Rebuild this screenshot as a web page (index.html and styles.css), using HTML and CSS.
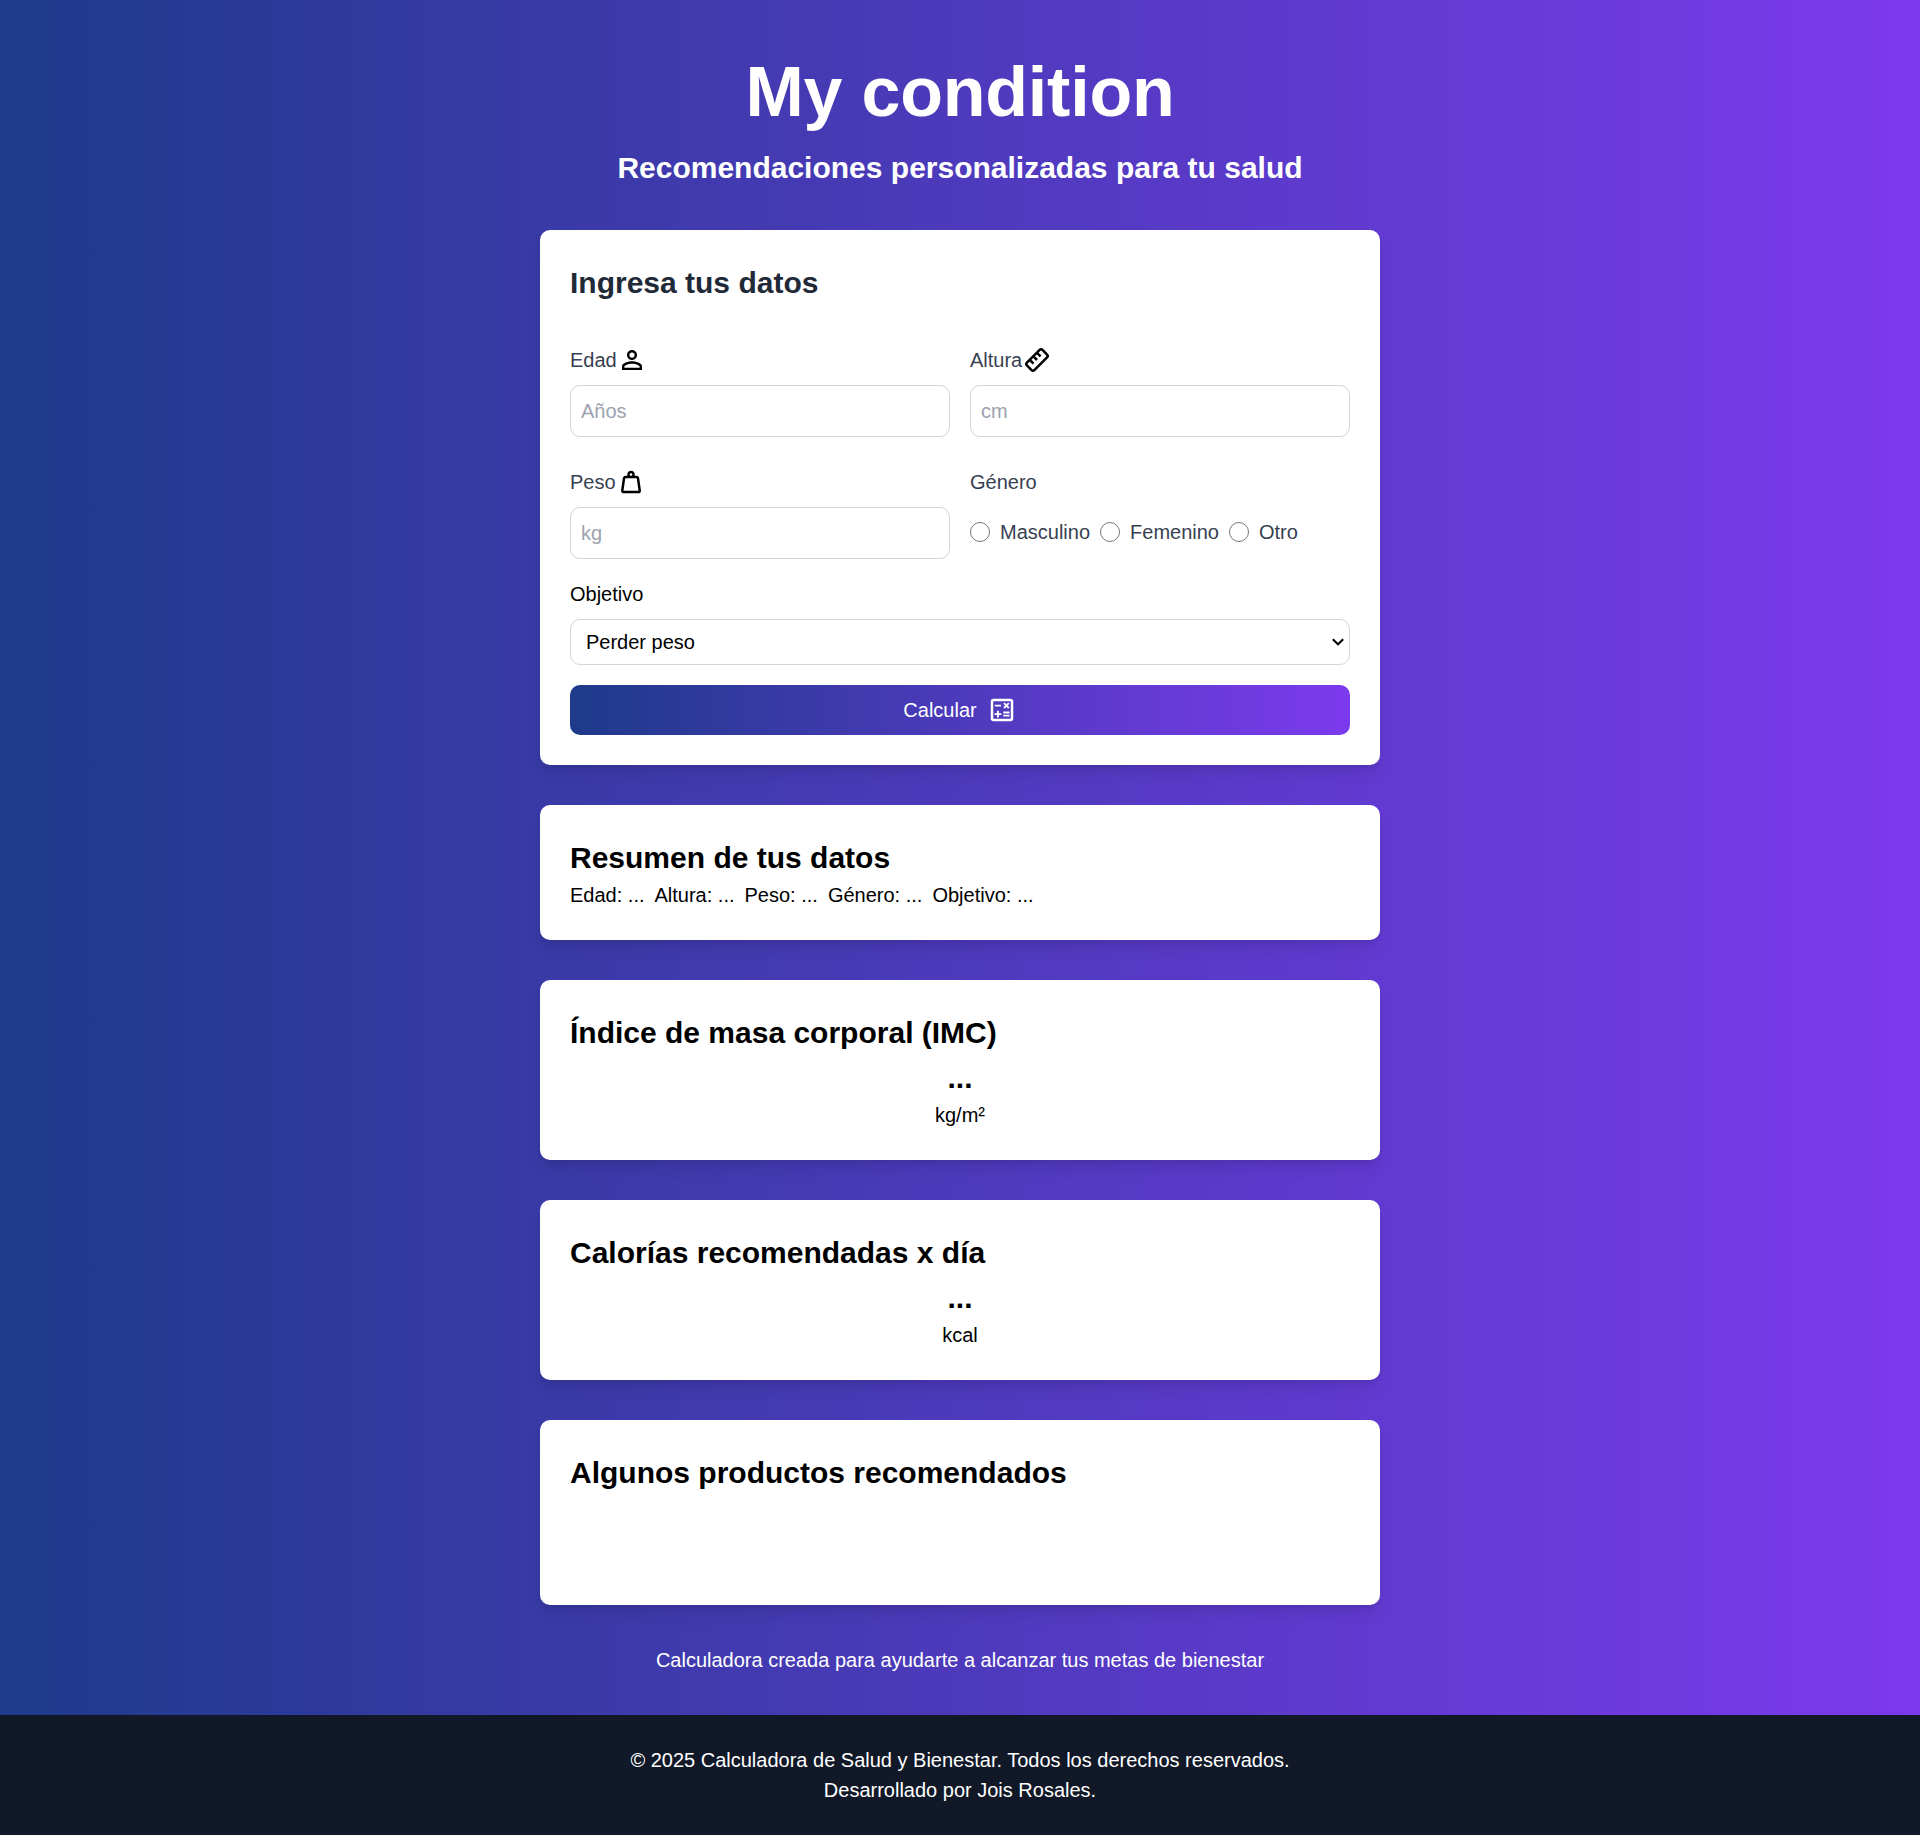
FILE: index.html
```html
<!DOCTYPE html>
<html lang="es">
<head>
<meta charset="utf-8">
<title>My condition</title>
<link rel="stylesheet" href="styles.css">
</head>
<body>
<div class="page">
  <header class="header">
    <h1>My condition</h1>
    <h2>Recomendaciones personalizadas para tu salud</h2>
  </header>
  <main class="main">
    <section class="card">
      <h2 class="form-title">Ingresa tus datos</h2>
      <form class="form">
        <div class="fields">
          <div class="field">
            <label class="label" for="edad">Edad<svg class="icon" viewBox="0 0 24 24"><path d="M12 5.9a2.1 2.1 0 1 1 0 4.2 2.1 2.1 0 0 1 0-4.2m0 9c2.97 0 6.1 1.46 6.1 2.1v1.1H5.9V17c0-.64 3.13-2.1 6.1-2.1M12 4C9.79 4 8 5.79 8 8s1.79 4 4 4 4-1.79 4-4-1.79-4-4-4zm0 9c-2.67 0-8 1.34-8 4v3h16v-3c0-2.66-5.33-4-8-4z"/></svg></label>
            <input class="input" id="edad" type="text" placeholder="Años">
          </div>
          <div class="field">
            <label class="label" for="altura">Altura<svg class="icon" viewBox="0 0 24 24"><g transform="rotate(-45 12 12)" fill="none" stroke="#000" stroke-width="2"><rect x="3.200" y="7.800" width="17.600" height="8.400" rx="1.600"/><path d="M8 8v4M12 8v4M16 8v4"/></g></svg></label>
            <input class="input" id="altura" type="text" placeholder="cm">
          </div>
          <div class="field">
            <label class="label" for="peso">Peso<svg class="icon" viewBox="0 -960 960 960"><path d="M240-200h480l-57-400H297l-57 400Zm240-480q17 0 28.500-11.500T520-720q0-17-11.500-28.500T480-760q-17 0-28.500 11.500T440-720q0 17 11.500 28.500T480-680Zm113 0h70q30 0 52 20t27 49l57 400q5 36-18.500 63.500T720-120H240q-37 0-60.500-27.500T161-211l57-400q5-29 27-49t52-20h70q-3-10-5-19.500t-2-20.500q0-50 35-85t85-35q50 0 85 35t35 85q0 11-2 20.500t-5 19.500Z"/></svg></label>
            <input class="input" id="peso" type="text" placeholder="kg">
          </div>
          <div class="field">
            <span class="label">Género</span>
            <div class="radios">
              <label class="radio"><input type="radio" name="genero">Masculino</label>
              <label class="radio"><input type="radio" name="genero">Femenino</label>
              <label class="radio"><input type="radio" name="genero">Otro</label>
            </div>
          </div>
        </div>
        <div class="goal">
          <label for="objetivo">Objetivo</label>
          <select class="select" id="objetivo"><option>Perder peso</option></select>
        </div>
        <button class="button" type="button">Calcular<svg class="icon" viewBox="0 0 24 24"><path d="M19 3H5c-1.100 0-2 .9-2 2v14c0 1.100.9 2 2 2h14c1.100 0 2-.9 2-2V5c0-1.100-.9-2-2-2zm0 16H5V5h14v14zM6.250 7.720h5v1.500h-5zM13 15.750h5v1.500h-5zM13 13.250h5v1.500h-5zM8 18h1.500v-2h2v-1.500h-2v-2H8v2H6V16h2zM14.090 10.950l1.410-1.410 1.410 1.410 1.060-1.060-1.410-1.420 1.410-1.410L16.910 6 15.500 7.410 14.090 6l-1.060 1.060 1.410 1.410-1.410 1.420z"/></svg></button>
      </form>
    </section>
    <section class="card">
      <h2>Resumen de tus datos</h2>
      <div class="summary"><p>Edad: ...</p><p>Altura: ...</p><p>Peso: ...</p><p>Género: ...</p><p>Objetivo: ...</p></div>
    </section>
    <section class="card">
      <h2>Índice de masa corporal (IMC)</h2>
      <div class="result"><strong>...</strong><p>kg/m²</p></div>
    </section>
    <section class="card">
      <h2>Calorías recomendadas x día</h2>
      <div class="result"><strong>...</strong><p>kcal</p></div>
    </section>
    <section class="card">
      <h2>Algunos productos recomendados</h2>
      <div class="products"></div>
    </section>
  </main>
  <p class="tagline">Calculadora creada para ayudarte a alcanzar tus metas de bienestar</p>
</div>
<footer class="footer">
  <p>© 2025 Calculadora de Salud y Bienestar. Todos los derechos reservados.</p>
  <p>Desarrollado por Jois Rosales.</p>
</footer>
</body>
</html>
```
FILE: styles.css
```css
* { box-sizing: border-box; margin: 0; padding: 0; }

body {
  font: 20px/1.5 "Liberation Sans", Arial, sans-serif;
  color: #000;
  background: linear-gradient(to right, #1e3a8a, #7c3aed);
}

input, select, button { font: inherit; color: inherit; }

h2 { font-size: 30px; font-weight: 700; }

.page {
  display: flex;
  flex-direction: column;
  align-items: center;
  gap: 40px;
  padding: 40px 0;
}

.header { text-align: center; color: #fff; }
.header h1 { font-size: 70px; letter-spacing: -0.2px; }

.main { display: flex; flex-direction: column; gap: 40px; width: 840px; }

.card {
  padding: 30px;
  background: #fff;
  border-radius: 10px;
  box-shadow: 0 10px 15px -3px rgb(0 0 0 / 0.1), 0 4px 6px -4px rgb(0 0 0 / 0.1);
}

.form-title { color: #1f2937; margin-bottom: 40px; }
.form { display: flex; flex-direction: column; gap: 20px; }

.fields { display: grid; grid-template-columns: 1fr 1fr; gap: 30px 20px; }
.field { display: flex; flex-direction: column; gap: 10px; color: #374151; }
.label { display: flex; align-items: center; height: 30px; }
.icon { width: 30px; height: 30px; fill: #000; }

.input {
  width: 100%;
  height: 52px;
  padding: 10px;
  border: 1px solid #d1d5db;
  border-radius: 10px;
}
.input::placeholder { color: #9ca3af; }

.radios { display: flex; gap: 10px; padding-top: 10px; }
.radio { display: flex; align-items: center; gap: 10px; }
.radio input { width: 20px; height: 20px; }

.goal { display: flex; flex-direction: column; gap: 10px; }
.select {
  appearance: none;
  height: 46px;
  padding: 0 15px;
  background: #fff url("data:image/svg+xml,%3Csvg xmlns='http://www.w3.org/2000/svg' width='12' height='8' fill='none' stroke='%23000' stroke-width='2'%3E%3Cpath d='M.8 1.300 6 6.300l5.200-5'/%3E%3C/svg%3E") no-repeat right 5px center;
  border: 1px solid #d1d5db;
  border-radius: 10px;
}

.button {
  display: flex;
  align-items: center;
  justify-content: center;
  gap: 10px;
  height: 50px;
  border: 0;
  border-radius: 10px;
  color: #fff;
  background: linear-gradient(to right, #1e3a8a, #7c3aed);
}
.button .icon { fill: #fff; }

.summary { display: flex; gap: 10px; }
.result { text-align: center; }
.result strong { display: block; font-size: 30px; }
.products { height: 80px; }

.tagline { color: #fff; }

.footer { padding: 30px; text-align: center; color: #fff; background: #111827; }
```
